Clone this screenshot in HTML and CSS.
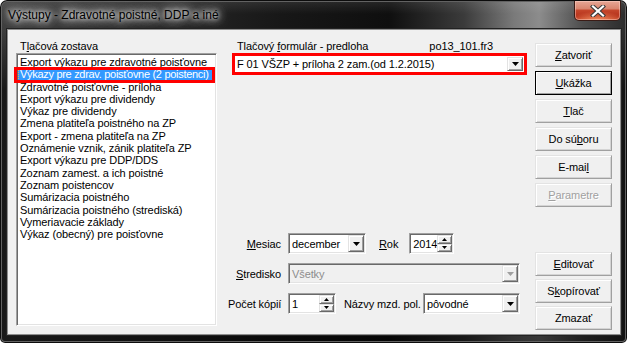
FILE: index.html
```html
<!DOCTYPE html>
<html lang="sk">

<head>
    <meta charset="utf-8">
    <title>Výstupy - Zdravotné poistné, DDP a iné</title>
    <link rel="stylesheet" href="styles.css">
</head>

<body>
    <div class="window">
        <div class="titlebar">
            <span class="title">Výstupy - Zdravotné poistné, DDP a iné</span>
            <button class="close" aria-label="Zavrieť">
                <svg width="16" height="12" viewBox="0 0 16 12">
                    <path d="M3 1.5 L13 10.5 M13 1.5 L3 10.5" stroke="#3a3a3a" stroke-width="4.2" stroke-linecap="square" fill="none" />
                    <path d="M3 1.5 L13 10.5 M13 1.5 L3 10.5" stroke="#fff" stroke-width="2.2" stroke-linecap="square" fill="none" />
                </svg>
            </button>
        </div>

        <div class="client">
            <section class="report">
                <div class="caption">T<u>l</u>ačová zostava</div>
                <ul class="list">
                    <li><span>Export výkazu pre zdravotné poisťovne</span></li>
                    <li class="selected"><span>Výkazy pre zdrav. poisťovne (2 poistenci)</span></li>
                    <li><span>Zdravotné poisťovne - príloha</span></li>
                    <li><span>Export výkazu pre dividendy</span></li>
                    <li><span>Výkaz pre dividendy</span></li>
                    <li><span>Zmena platiteľa poistného na ZP</span></li>
                    <li><span>Export - zmena platiteľa na ZP</span></li>
                    <li><span>Oznámenie vznik, zánik platiteľa ZP</span></li>
                    <li><span>Export výkazu pre DDP/DDS</span></li>
                    <li><span>Zoznam zamest. a ich poistné</span></li>
                    <li><span>Zoznam poistencov</span></li>
                    <li><span>Sumárizacia poistného</span></li>
                    <li><span>Sumárizacia poistného (strediská)</span></li>
                    <li><span>Vymeriavacie základy</span></li>
                    <li><span>Výkaz (obecný) pre poisťovne</span></li>
                </ul>
            </section>

            <section class="form">
                <div class="form-head">
                    <span>Tlačový <u>f</u>ormulár - predloha</span>
                    <span class="file">po13_101.fr3</span>
                </div>
                <div class="combo combo-main">
                    <span class="value">F 01 VŠZP + príloha 2 zam.(od 1.2.2015)</span>
                    <span class="drop"><svg width="7" height="4" viewBox="0 0 7 4"><polygon points="0,0 7,0 3.5,4" /></svg></span>
                </div>

                <div class="options">
                    <label class="opt-label"><u>M</u>esiac</label>
                    <div class="row">
                        <div class="combo combo-month">
                            <span class="value">december</span>
                            <span class="drop"><svg width="7" height="4" viewBox="0 0 7 4"><polygon points="0,0 7,0 3.5,4" /></svg></span>
                        </div>
                        <label class="opt-label year-label"><u>R</u>ok</label>
                        <div class="spin spin-year">
                            <span class="value">2014</span>
                            <span class="spin-btns">
                                <i><svg width="5" height="3" viewBox="0 0 5 3"><polygon points="0,3 5,3 2.5,0" /></svg></i>
                                <i><svg width="5" height="3" viewBox="0 0 5 3"><polygon points="0,0 5,0 2.5,3" /></svg></i>
                            </span>
                        </div>
                    </div>

                    <label class="opt-label"><u>S</u>tredisko</label>
                    <div class="row">
                        <div class="combo combo-wide disabled">
                            <span class="value">Všetky</span>
                            <span class="drop"><svg width="7" height="4" viewBox="0 0 7 4"><polygon points="0,0 7,0 3.5,4" /></svg></span>
                        </div>
                    </div>

                    <label class="opt-label">Počet kópií</label>
                    <div class="row">
                        <div class="spin spin-copies">
                            <span class="value">1</span>
                            <span class="spin-btns">
                                <i><svg width="5" height="3" viewBox="0 0 5 3"><polygon points="0,3 5,3 2.5,0" /></svg></i>
                                <i><svg width="5" height="3" viewBox="0 0 5 3"><polygon points="0,0 5,0 2.5,3" /></svg></i>
                            </span>
                        </div>
                        <label class="opt-label names-label">Názvy mzd. pol.</label>
                        <div class="combo combo-names">
                            <span class="value">pôvodné</span>
                            <span class="drop"><svg width="7" height="4" viewBox="0 0 7 4"><polygon points="0,0 7,0 3.5,4" /></svg></span>
                        </div>
                    </div>
                </div>
            </section>

            <section class="actions">
                <div class="group group-top">
                    <button class="btn"><u>Z</u>atvoriť</button>
                    <button class="btn default"><u>U</u>kážka</button>
                    <button class="btn"><u>T</u>lač</button>
                    <button class="btn">Do sú<u>b</u>oru</button>
                    <button class="btn">E-mai<u>l</u></button>
                    <button class="btn" disabled><u>P</u>arametre</button>
                </div>
                <div class="group group-bottom">
                    <button class="btn"><u>E</u>ditovať</button>
                    <button class="btn">S<u>k</u>opírovať</button>
                    <button class="btn">Zmazať</button>
                </div>
            </section>
        </div>
    </div>
</body>

</html>
```

FILE: styles.css
```css
body {
    margin: 0;
    background: #fff;
    font-family: "Liberation Sans", Arial, sans-serif;
    font-size: 11px;
    letter-spacing: -0.1px;
    color: #000;
}

u {
    text-decoration: underline;
    text-underline-offset: 1px;
}

.window {
    width: 627px;
    height: 343px;
    box-sizing: border-box;
    padding: 0 6px 8px 7px;
    display: flex;
    flex-direction: column;
    border-radius: 7px 7px 5px 5px;
    background:
        linear-gradient(180deg, rgba(255, 255, 255, 0.1) 0, rgba(255, 255, 255, 0) 14px),
        linear-gradient(180deg, rgba(0, 0, 0, 0) 30px, rgba(0, 0, 0, 0.6) 90px),
        linear-gradient(90deg, #3e3e3e 0%, #2c2c2c 22%, #171717 45%, #0f0f0f 62%, #3b3b3b 74%, #7a7a7a 82%, #8c8c8c 86%, #4d4d4d 93%, #2b2b2b 100%);
    box-shadow: inset 0 0 0 1px #0c0c0c, inset 0 0 0 2px #626262;
}

.titlebar {
    height: 29px;
    flex: none;
    display: flex;
    align-items: flex-start;
}

.title {
    margin-top: 8px;
    margin-left: 1px;
    font-size: 12px;
    letter-spacing: 0;
    line-height: 15px;
    color: #000;
    text-shadow:
        0 0 4px rgba(255, 255, 255, 0.95),
        0 0 8px rgba(255, 255, 255, 0.85),
        0 0 12px rgba(255, 255, 255, 0.75),
        0 0 18px rgba(255, 255, 255, 0.6),
        0 0 24px rgba(255, 255, 255, 0.4);
}

.close {
    margin-left: auto;
    margin-top: 1px;
    width: 47px;
    height: 20px;
    padding: 0;
    border: 1px solid #3b1c16;
    border-top: none;
    border-radius: 0 0 5px 5px;
    background:
        radial-gradient(ellipse 60% 45% at 50% 100%, rgba(255, 160, 110, 0.8), rgba(255, 160, 110, 0) 100%),
        linear-gradient(180deg, #e6a796 0%, #d98670 40%, #c4452a 50%, #b5311a 80%, #c03d22 100%);
    box-shadow: inset 0 0 0 1px rgba(255, 220, 210, 0.45);
    display: flex;
    align-items: center;
    justify-content: center;
}

.client {
    flex: 1;
    display: flex;
    background: #f0f0f0;
    border: 1px solid #8e8e8e;
    box-shadow: 0 0 0 1px #222;
    padding: 10px 8px 0 8px;
}

/* left: report list */

.report {
    width: 201px;
    flex: none;
    display: flex;
    flex-direction: column;
}

.caption {
    line-height: 13px;
    padding-left: 4px;
}

.list {
    list-style: none;
    margin: 0;
    padding: 1px 0 0 0;
    height: 273px;
    box-sizing: border-box;
    background: #fff;
    border: 1px solid;
    border-color: #a0a0a0 #fff #fff #a0a0a0;
    box-shadow: inset 1px 1px 0 #696969, inset -1px -1px 0 #e3e3e3;
}

.list li {
    position: relative;
    margin: 0 1px;
    line-height: 12.3px;
    height: 12.3px;
    white-space: nowrap;
}

.list li span {
    display: block;
    overflow: hidden;
    padding-left: 2px;
}

.list li:first-child {
    margin-top: 1px;
}

.list li.selected span {
    background: #3399ff;
    color: #fff;
    letter-spacing: -0.3px;
    outline: 1px dotted #f3a94d;
    outline-offset: -1px;
}

.list li.selected::after {
    content: "";
    position: absolute;
    left: -4px;
    right: 0;
    top: -1px;
    height: 16px;
    box-sizing: border-box;
    border: 3px solid #ff0000;
}

/* middle: form and options */

.form {
    width: 299px;
    flex: none;
    margin-left: 11px;
    display: flex;
    flex-direction: column;
}

.form-head {
    display: flex;
    line-height: 13px;
    padding-left: 9px;
}

.form-head .file {
    margin-left: auto;
    margin-right: 34px;
}

.combo,
.spin {
    box-sizing: border-box;
    height: 21px;
    display: flex;
    align-items: center;
    background: #fff;
    border: 1px solid;
    border-color: #a0a0a0 #fff #fff #a0a0a0;
    box-shadow: inset 1px 1px 0 #696969, inset -1px -1px 0 #e3e3e3;
    padding: 1px;
}

.combo .value,
.spin .value {
    flex: 1;
    padding-left: 2px;
    white-space: nowrap;
    overflow: hidden;
}

.drop {
    width: 16px;
    height: 17px;
    box-sizing: border-box;
    flex: none;
    display: flex;
    align-items: center;
    justify-content: center;
    background: #f0f0f0;
    border: 1px solid;
    border-color: #e3e3e3 #696969 #696969 #e3e3e3;
    box-shadow: inset 1px 1px 0 #fff, inset -1px -1px 0 #a0a0a0;
}

.drop svg,
.spin-btns svg {
    fill: #000;
}

.combo-main {
    margin-left: 4px;
    width: 295px;
    height: 22px;
    border: 3px solid #ff0000;
    box-shadow: none;
    padding: 0 1px 0 0;
}

.combo-main .drop {
    height: 14px;
    margin-top: 1px;
    margin-bottom: 1px;
}

.options {
    margin-top: 158px;
    display: grid;
    grid-template-columns: 53px auto;
    column-gap: 7px;
    row-gap: 9px;
    align-items: center;
}

.opt-label {
    text-align: right;
    white-space: nowrap;
}

.row {
    display: flex;
    align-items: center;
    width: 232px;
}

.combo-month {
    width: 78px;
}

.year-label {
    margin-left: 13px;
}

.spin-year {
    width: 45px;
    margin-left: 11px;
}

.combo-wide {
    width: 232px;
}

.combo.disabled {
    background: #f0f0f0;
    color: #8d8d8d;
}

.combo.disabled .drop svg {
    fill: #a0a0a0;
}

.spin-copies {
    width: 48px;
}

.names-label {
    margin-left: 8px;
}

.combo-names {
    width: 97px;
    margin-left: auto;
}

.spin-btns {
    width: 15px;
    height: 17px;
    flex: none;
    display: flex;
    flex-direction: column;
}

.spin-btns i {
    flex: 1;
    box-sizing: border-box;
    display: flex;
    align-items: center;
    justify-content: center;
    background: #f0f0f0;
    border: 1px solid;
    border-color: #e3e3e3 #696969 #696969 #e3e3e3;
    box-shadow: inset 1px 1px 0 #fff, inset -1px -1px 0 #a0a0a0;
}

/* right: buttons */

.actions {
    width: 77px;
    flex: none;
    margin-left: 8px;
    padding: 3px 0 4px;
    display: flex;
    flex-direction: column;
    justify-content: space-between;
}

.group {
    display: flex;
    flex-direction: column;
}

.group-top {
    gap: 4px;
}

.group-bottom {
    gap: 3px;
}

.btn {
    height: 24px;
    padding: 0;
    font-family: inherit;
    font-size: 11px;
    letter-spacing: -0.1px;
    color: #000;
    background: #f0f0f0;
    border: 1px solid;
    border-color: #e3e3e3 #a0a0a0 #a0a0a0 #e3e3e3;
    box-shadow: inset 1px 1px 0 #fff, inset -1px -1px 0 #d4d4d4;

    &.default {
        border-color: #000;
        box-shadow: inset 1px 1px 0 #fff, inset -1px -1px 0 #a0a0a0;
    }

    &:disabled {
        color: #a0a0a0;
        text-shadow: 1px 1px 0 #fff;
    }
}
```
